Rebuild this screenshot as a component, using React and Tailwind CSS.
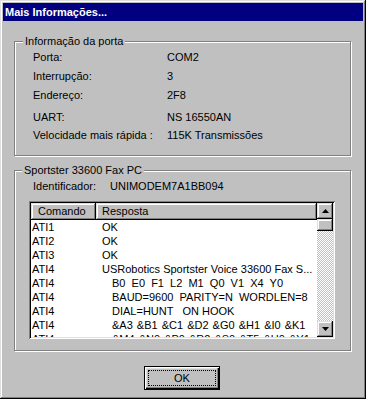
import React from "react";

const font = { fontFamily: '"Liberation Sans", Arial, sans-serif' };

function UpArrow() {
  return (
    <svg width="7" height="4" viewBox="0 0 7 4" className="block">
      <polygon points="3.5,0 7,4 0,4" fill="#000" />
    </svg>
  );
}
function DownArrow() {
  return (
    <svg width="7" height="4" viewBox="0 0 7 4" className="block">
      <polygon points="0,0 7,0 3.5,4" fill="#000" />
    </svg>
  );
}

const infoRows = [
  ["Porta:", "COM2", "mt-[9px]"],
  ["Interrupção:", "3", "mt-[6px]"],
  ["Endereço:", "2F8", "mt-[6px]"],
  ["UART:", "NS 16550AN", "mt-[9px]"],
  ["Velocidade mais rápida :", "115K Transmissões", "mt-[5px]"],
];

const listRows = [
  ["ATI1", "OK", 0],
  ["ATI2", "OK", 0],
  ["ATI3", "OK", 0],
  ["ATI4", "USRobotics Sportster Voice 33600 Fax S...", 0],
  ["ATI4", "B0  E0  F1  L2  M1  Q0  V1  X4  Y0", 1],
  ["ATI4", "BAUD=9600  PARITY=N  WORDLEN=8", 1],
  ["ATI4", "DIAL=HUNT   ON HOOK", 1],
  ["ATI4", "&A3 &B1 &C1 &D2 &G0 &H1 &I0 &K1", 2],
  ["ATI4", "&M4 &N0 &P0 &R2 &S0 &T5 &U0 &Y1", 2],
];

const raised =
  "bg-[#c0c0c0] shadow-[inset_-1px_-1px_#000,inset_1px_1px_#dfdfdf,inset_-2px_-2px_#808080,inset_2px_2px_#fff]";

export default function App() {
  return (
    <div
      style={font}
      className="w-[366px] h-[399px] bg-[#c0c0c0] p-[3px] flex flex-col text-[11px] leading-[13px] text-black shadow-[inset_-1px_-1px_#000,inset_1px_1px_#dfdfdf,inset_-2px_-2px_#808080,inset_2px_2px_#fff] overflow-hidden"
    >
      {/* Title bar */}
      <div className="h-[18px] bg-[#000080] text-white font-bold text-[11px] pl-[2px] flex items-center">
        Mais Informações...
      </div>

      {/* Group 1 */}
      <div className="relative ml-[11px] mt-[20px] w-[337px] h-[115px] border border-[#808080] shadow-[1px_1px_0_#fff,inset_1px_1px_0_#fff] flex flex-col">
        <div className="absolute -top-[7px] left-[8px] px-[2px] bg-[#c0c0c0] leading-[13px]">
          Informação da porta
        </div>
        {infoRows.map(([l, v, m]) => (
          <div key={l} className={`flex h-[13px] pl-[18px] ${m}`}>
            <div className="w-[134px] whitespace-nowrap">{l}</div>
            <div className="whitespace-nowrap">{v}</div>
          </div>
        ))}
      </div>

      {/* Group 2 */}
      <div className="relative ml-[11px] mt-[14px] w-[337px] h-[181px] border border-[#808080] shadow-[1px_1px_0_#fff,inset_1px_1px_0_#fff] flex flex-col">
        <div className="absolute -top-[7px] left-[7px] px-[2px] bg-[#c0c0c0] leading-[13px]">
          Sportster 33600 Fax PC
        </div>
        <div className="flex h-[13px] pl-[18px] mt-[9px]">
          <div className="w-[77px] whitespace-nowrap">Identificador:</div>
          <div className="whitespace-nowrap">UNIMODEM7A1BB094</div>
        </div>

        {/* List view */}
        <div className="ml-[14px] mt-[8px] w-[306px] h-[138px] p-[2px] bg-white shadow-[inset_1px_1px_#808080,inset_-1px_-1px_#fff,inset_2px_2px_#000,inset_-2px_-2px_#dfdfdf] flex">
          <div className="w-[286px] h-[134px] flex flex-col overflow-hidden">
            <div className="flex h-[17px] shrink-0">
              <div className={`w-[65px] h-[17px] pl-[7px] flex items-center ${raised}`}>Comando</div>
              <div className={`w-[221px] h-[17px] pl-[6px] flex items-center ${raised}`}>Resposta</div>
            </div>
            {listRows.map(([c, r, indent], i) => (
              <div key={i} className="flex h-[14px] shrink-0 items-center leading-[14px]">
                <div className="w-[65px] pl-[1px] whitespace-pre">{c}</div>
                <div
                  className={`whitespace-pre ${
                    indent === 0 ? "pl-[6px]" : indent === 1 ? "pl-[16px]" : "pl-[16px] [word-spacing:1px]"
                  }`}
                >
                  {r}
                </div>
              </div>
            ))}
          </div>
          {/* Scrollbar */}
          <div className="w-[16px] h-[134px] flex flex-col">
            <div className={`w-[16px] h-[16px] flex items-center justify-center ${raised}`}>
              <UpArrow />
            </div>
            <div className="flex-1 flex flex-col bg-[repeating-conic-gradient(#c0c0c0_0_25%,#fff_0_50%)] bg-[length:2px_2px]">
              <div className={`w-[16px] h-[12px] ${raised}`} />
            </div>
            <div className={`w-[16px] h-[16px] flex items-center justify-center ${raised}`}>
              <DownArrow />
            </div>
          </div>
        </div>
      </div>

      {/* OK button */}
      <div className="ml-[141px] mt-[15px] w-[76px] h-[24px] border border-black p-[3px] flex shadow-[inset_1px_1px_#fff,inset_-1px_-1px_#000,inset_-2px_-2px_#808080,inset_2px_2px_#dfdfdf]">
        <div className="flex-1 border border-dotted border-black flex items-center justify-center">
          OK
        </div>
      </div>
    </div>
  );
}
